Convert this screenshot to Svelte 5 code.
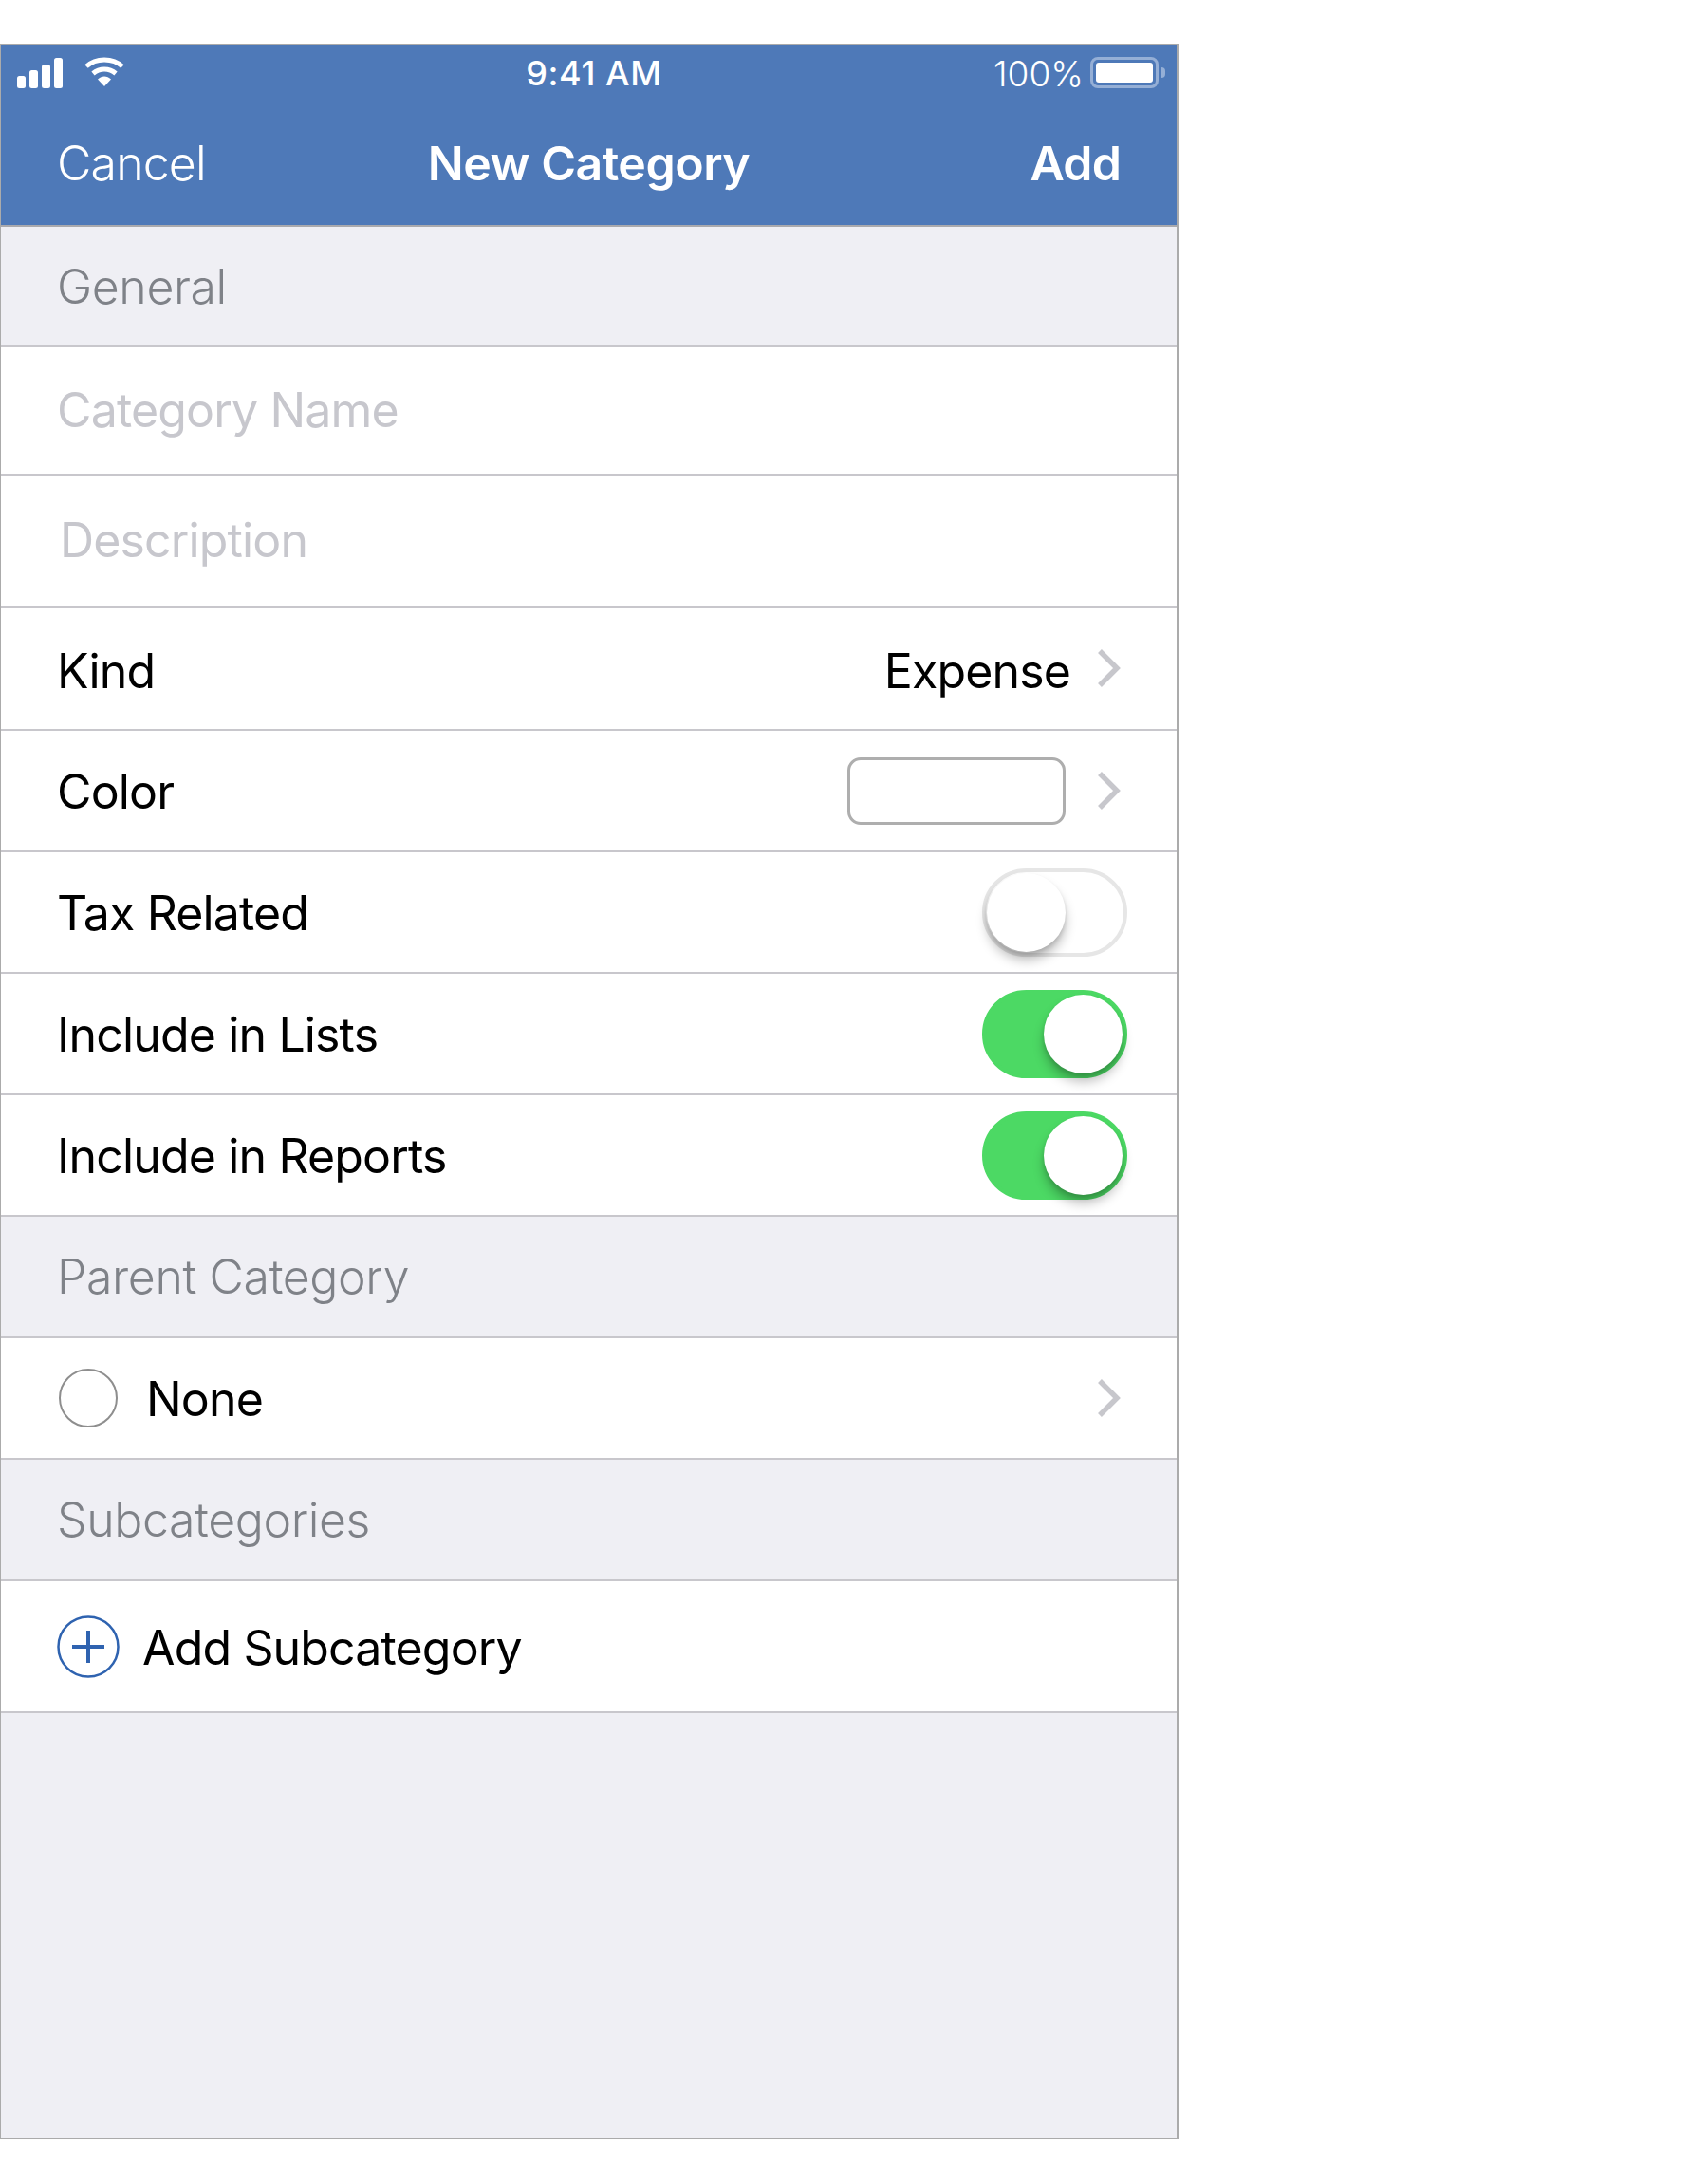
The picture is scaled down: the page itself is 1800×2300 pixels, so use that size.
<script>
  const toggles = [
    { label: 'Tax Related', on: false },
    { label: 'Include in Lists', on: true },
    { label: 'Include in Reports', on: true }
  ];
</script>

{#snippet chevron()}
  <svg class="chevron" width="26" height="42" viewBox="0 0 26 42">
    <path d="M3 3 L21 21 L3 39" fill="none" stroke="#c7c7cc" stroke-width="5.5" />
  </svg>
{/snippet}

<div class="phone">
  <header class="nav">
    <div class="status">
      <div class="status-left">
        <svg width="50" height="32" viewBox="0 0 50 32">
          <rect x="0" y="19" width="9" height="13" rx="2.5" fill="#fff" />
          <rect x="13" y="13" width="9" height="19" rx="2.5" fill="#fff" />
          <rect x="26" y="7" width="9" height="25" rx="2.5" fill="#fff" />
          <rect x="39" y="0" width="9" height="32" rx="2.5" fill="#fff" />
        </svg>
        <svg class="wifi" width="42" height="32" viewBox="0 0 42 32">
          <path d="M2 10 C12 0.5 30 0.5 40 10" fill="none" stroke="#fff" stroke-width="5" />
          <path d="M9 17.5 C16 11.5 26 11.5 33 17.5" fill="none" stroke="#fff" stroke-width="5" />
          <path d="M14 23.5 L21 31 L28 23.5 C23.5 19.5 18.5 19.5 14 23.5 Z" fill="#fff" />
        </svg>
      </div>
      <span class="time">9:41 AM</span>
      <div class="status-right">
        <span class="pct">100%</span>
        <div class="battery"><div class="battery-fill"></div></div>
        <div class="battery-tip"></div>
      </div>
    </div>
    <div class="bar">
      <span class="nav-btn">Cancel</span>
      <span class="nav-title">New Category</span>
      <span class="nav-btn add">Add</span>
    </div>
  </header>

  <div class="section first">General</div>
  <div class="row name"><span class="placeholder">Category Name</span></div>
  <div class="row desc"><span class="placeholder">Description</span></div>
  <div class="row kind">
    <span>Kind</span>
    <div class="value">
      <span>Expense</span>
      {@render chevron()}
    </div>
  </div>
  <div class="row color">
    <span>Color</span>
    <div class="value">
      <div class="swatch"></div>
      {@render chevron()}
    </div>
  </div>
  {#each toggles as t}
    <div class="row toggle-row">
      <span>{t.label}</span>
      <div class="toggle" class:on={t.on}><div class="knob"></div></div>
    </div>
  {/each}

  <div class="section">Parent Category</div>
  <div class="row parent">
    <div class="left">
      <div class="radio"></div>
      <span>None</span>
    </div>
    {@render chevron()}
  </div>

  <div class="section">Subcategories</div>
  <div class="row addsub">
    <div class="left">
      <svg width="66" height="66" viewBox="0 0 66 66">
        <circle cx="33" cy="33" r="31.5" fill="none" stroke="#2f63b0" stroke-width="2.5" />
        <path d="M33 16 V50 M16 33 H50" stroke="#2f63b0" stroke-width="4" />
      </svg>
      <span>Add Subcategory</span>
    </div>
  </div>
  <div class="rest"></div>
</div>

<style>
  :global(body) {
    margin: 0;
    background: #fff;
  }

  .phone {
    box-sizing: border-box;
    width: 1242px;
    height: 2208px;
    margin-top: 46px;
    border: 1px solid #ababab;
    border-width: 1px 2px 1px 1px;
    display: flex;
    flex-direction: column;
    font-family: Inter, "Liberation Sans", sans-serif;
    font-size: 50px;
    letter-spacing: -0.85px;
    color: #000;
    background: #fff;
  }

  .nav {
    height: 190px;
    flex: none;
    background: #4e79b8;
    color: #fff;
    display: flex;
    flex-direction: column;
    border-bottom: 2px solid #a9a9ad;
    box-sizing: content-box;
  }

  .status {
    height: 60px;
    display: grid;
    grid-template-columns: 1fr auto 1fr;
    align-items: center;
    padding: 0 12px 0 17px;
  }

  .status-left {
    display: flex;
    align-items: center;
    gap: 21px;
  }

  .wifi {
    margin-top: -2px;
  }

  .time {
    font-size: 36px;
    font-weight: 500;
    letter-spacing: 0.6px;
    margin-left: 6px;
  }

  .status-right {
    display: flex;
    align-items: center;
    justify-content: flex-end;
    font-size: 37px;
    letter-spacing: 0;
    font-weight: 300;
  }

  .pct {
    margin-right: 7px;
  }

  .battery {
    box-sizing: border-box;
    width: 72px;
    height: 33px;
    margin-top: -2px;
    border: 3px solid #95afd6;
    border-radius: 8px;
    padding: 3px;
  }

  .battery-fill {
    height: 100%;
    background: #fff;
    border-radius: 3px;
  }

  .battery-tip {
    width: 4px;
    height: 11px;
    margin: -2px 0 0 3px;
    background: #95afd6;
    border-radius: 0 4px 4px 0;
  }

  .bar {
    flex: 1;
    display: grid;
    grid-template-columns: 1fr auto 1fr;
    align-items: center;
    padding: 0 59px;
  }

  .nav-btn {
    font-weight: 300;
  }

  .nav-title, .add {
    font-weight: 600;
  }

  .nav-title {
    letter-spacing: -0.5px;
  }

  .add {
    justify-self: end;
  }

  .section {
    height: 128px;
    flex: none;
    box-sizing: border-box;
    background: #efeff4;
    color: #7f8288;
    font-weight: 300;
    letter-spacing: -0.4px;
    padding-left: 59px;
    display: flex;
    align-items: center;
    border-bottom: 2px solid #c8c7cc;
  }

  .first {
    height: 127px;
  }

  .row {
    height: 128px;
    flex: none;
    box-sizing: border-box;
    padding: 0 58px 0 59px;
    display: flex;
    align-items: center;
    justify-content: space-between;
    border-bottom: 2px solid #c8c7cc;
    background: #fff;
    font-weight: 400;
  }

  .row span {
    padding-top: 2px;
  }

  .name { height: 135px; padding-bottom: 3px; }
  .desc { height: 140px; padding-bottom: 4px; }
  .kind { height: 129px; }

  .kind span {
    padding-top: 5px;
  }

  .placeholder {
    color: #c7c7cd;
    font-weight: 400;
  }

  .desc .placeholder {
    margin-left: 3px;
  }

  .value {
    display: flex;
    align-items: center;
  }

  .kind .chevron {
    margin-top: -2px;
  }

  .chevron {
    margin-left: 28px;
    flex: none;
  }

  .swatch {
    box-sizing: border-box;
    width: 230px;
    height: 71px;
    border: 3px solid #aeaeae;
    border-radius: 14px;
    margin-right: 5px;
  }

  .toggle {
    box-sizing: border-box;
    position: relative;
    width: 153px;
    height: 93px;
    margin-right: -6px;
    border-radius: 47px;
    background: #fff;
    border: 4px solid #e6e6e6;
  }

  .toggle.on {
    background: #4cd964;
    border-color: #4cd964;
  }

  .knob {
    position: absolute;
    left: 1px;
    top: 1px;
    width: 83px;
    height: 83px;
    border-radius: 50%;
    background: #fff;
    box-shadow: 0 9px 12px rgba(0, 0, 0, 0.25), 0 3px 4px rgba(0, 0, 0, 0.12);
  }

  .toggle.on .knob {
    left: 61px;
  }

  .left {
    display: flex;
    align-items: center;
  }

  .radio {
    box-sizing: border-box;
    width: 62px;
    height: 62px;
    border: 2px solid #8e8e8e;
    border-radius: 50%;
    margin: 0 30px 0 2px;
  }

  .addsub {
    height: 139px;
  }

  .addsub svg {
    margin-right: 24px;
  }

  .rest {
    flex: 1;
    background: #efeff4;
  }
</style>
